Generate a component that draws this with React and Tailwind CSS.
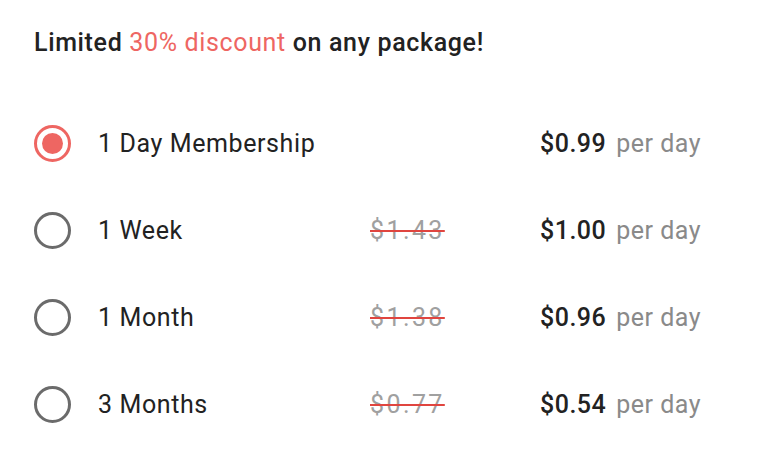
const plans = [
  { id: 'day', label: '1 Day Membership', old: null, price: '$0.99' },
  { id: 'week', label: '1 Week', old: '$1.43', price: '$1.00' },
  { id: 'month', label: '1 Month', old: '$1.38', price: '$0.96' },
  { id: '3months', label: '3 Months', old: '$0.77', price: '$0.54' },
]

function Radio({ checked }) {
  return (
    <span
      className={`flex items-center justify-center w-[37px] h-[37px] rounded-full border-[3px] ${
        checked ? 'border-[#ee6662]' : 'border-[#6b6b6b]'
      }`}
    >
      {checked && <span className="w-[21px] h-[21px] rounded-full bg-[#ee6662]" />}
    </span>
  )
}

export default function App() {
  const selected = 'day'

  return (
    <div className="w-[768px] h-[470px] bg-white pl-[34px] pt-[28px] font-['Roboto',sans-serif] text-[#222]">
      <h1 className="text-[25px] font-medium leading-[30px] tracking-[0.65px]">
        Limited <span className="text-[#ee6662] font-normal">30% discount</span> on any package!
      </h1>

      <ul className="mt-[67px] flex flex-col gap-[50px]">
        {plans.map(plan => (
          <li key={plan.id} className="flex items-center h-[37px]">
            <Radio checked={plan.id === selected} />
            <span className="ml-[27px] w-[272px] text-[25px] leading-none tracking-[0.6px]">{plan.label}</span>
            <span className="w-[170px] text-[25px] leading-none tracking-[2.4px] text-[#a0a0a0] line-through decoration-[#e0453f] decoration-2">
              {plan.old}
            </span>
            <span className="text-[25px] leading-none font-medium tracking-[0.5px]">{plan.price}</span>
            <span className="ml-[10px] text-[25px] leading-none tracking-[0.5px] text-[#8a8a8a]">per day</span>
          </li>
        ))}
      </ul>
    </div>
  )
}
